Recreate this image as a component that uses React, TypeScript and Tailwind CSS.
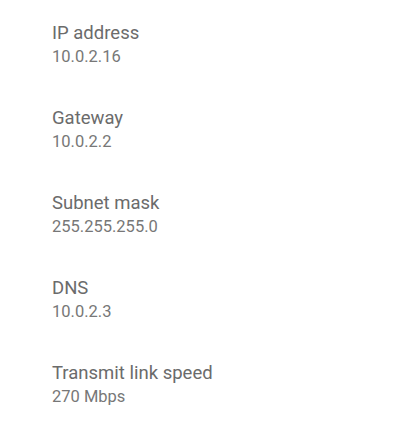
const rows = [
  { title: 'IP address', value: '10.0.2.16' },
  { title: 'Gateway', value: '10.0.2.2' },
  { title: 'Subnet mask', value: '255.255.255.0' },
  { title: 'DNS', value: '10.0.2.3' },
  { title: 'Transmit link speed', value: '270 Mbps' },
];

export default function App() {
  return (
    <div className="w-[412px] h-[432px] bg-white overflow-hidden" style={{ fontFamily: 'Roboto, sans-serif' }}>
      {rows.map((r) => (
        <div key={r.title} className="h-[85px] pl-[52px] pt-[20px]">
          <div className="text-[18.5px] leading-[26px] text-[#6b6b6b]">{r.title}</div>
          <div className="text-[16.5px] leading-[22px] text-[#777777]">{r.value}</div>
        </div>
      ))}
    </div>
  );
}
